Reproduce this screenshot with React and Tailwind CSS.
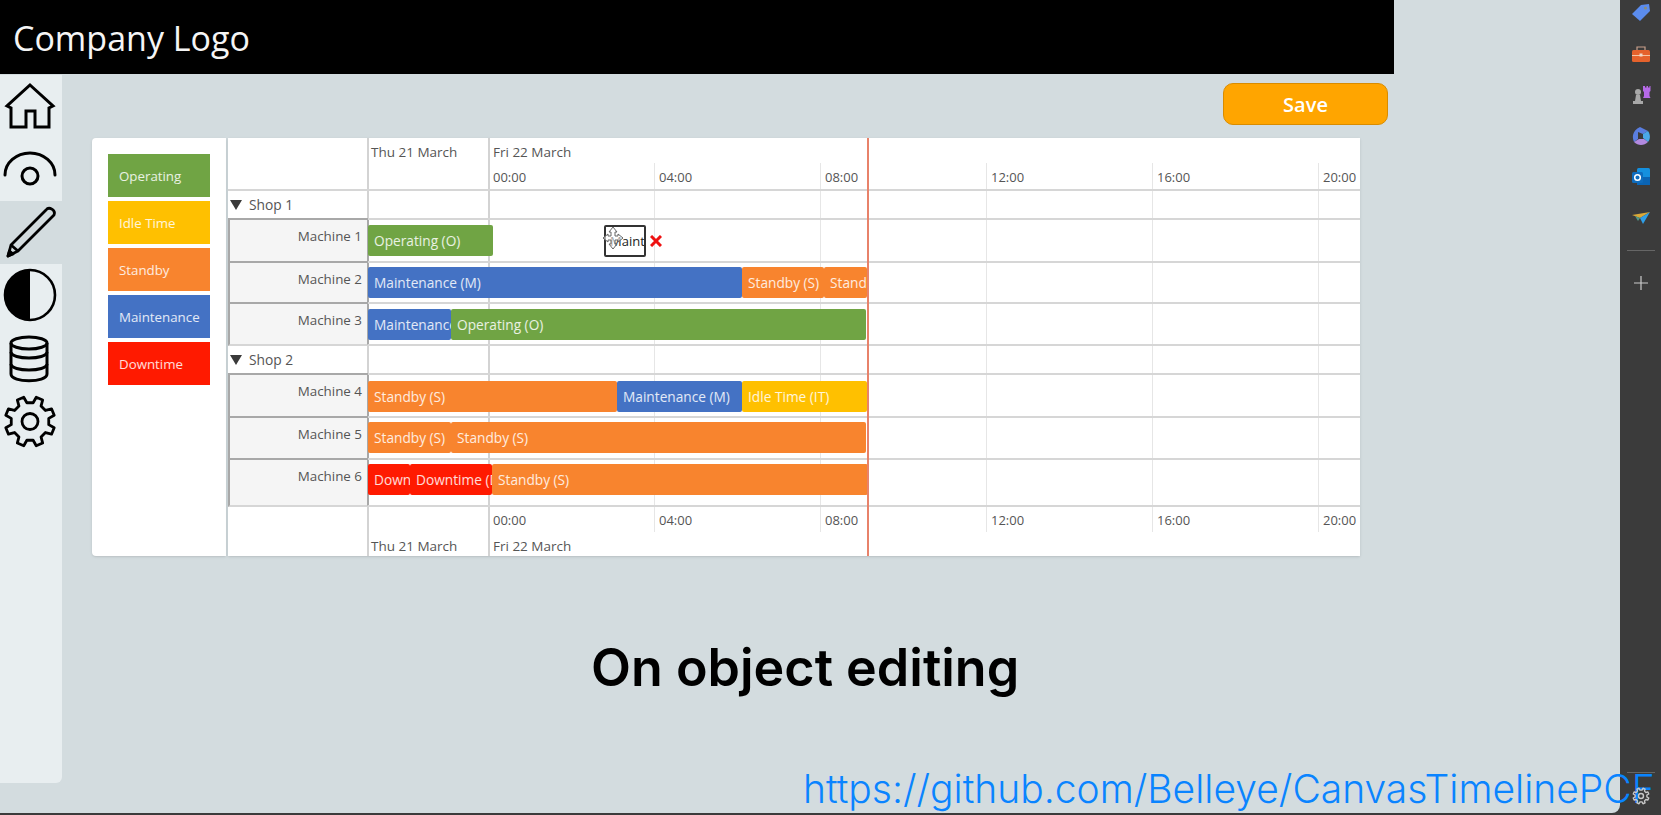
import React from 'react';

const legend = [
  { label: 'Operating', color: 'bg-[#70a444]' },
  { label: 'Idle Time', color: 'bg-[#ffc000]' },
  { label: 'Standby', color: 'bg-[#f8842e]' },
  { label: 'Maintenance', color: 'bg-[#4472c4]' },
  { label: 'Downtime', color: 'bg-[#ff1a00]' },
];

const hours = ['00:00', '04:00', '08:00', '12:00', '16:00', '20:00'];

const O = 'bg-[#70a444]';
const M = 'bg-[#4472c4]';
const S = 'bg-[#f8842e]';
const I = 'bg-[#ffc000]';
const D = 'bg-[#ff1a00]';

const groups = [
  {
    name: 'Shop 1',
    machines: [
      { name: 'Machine 1', h: 'h-[43px]', pt: 'pt-[5px]', bars: [{ w: 'w-[125px]', c: O, t: 'Operating (O)' }], ghost: true },
      { name: 'Machine 2', h: 'h-[41px]', pt: 'pt-[4px]', bars: [{ w: 'w-[374px]', c: M, t: 'Maintenance (M)' }, { w: 'w-[82px]', c: S, t: 'Standby (S)' }, { w: 'w-[43px]', c: S, t: 'Standby (S)' }] },
      { name: 'Machine 3', h: 'h-[42px]', pt: 'pt-[5px]', last: true, bars: [{ w: 'w-[83px]', c: M, t: 'Maintenance (M)' }, { w: 'w-[415px]', c: O, t: 'Operating (O)' }] },
    ],
  },
  {
    name: 'Shop 2',
    machines: [
      { name: 'Machine 4', h: 'h-[43px]', pt: 'pt-[6px]', bars: [{ w: 'w-[249px]', c: S, t: 'Standby (S)' }, { w: 'w-[125px]', c: M, t: 'Maintenance (M)' }, { w: 'w-[125px]', c: I, t: 'Idle Time (IT)' }] },
      { name: 'Machine 5', h: 'h-[42px]', pt: 'pt-[4px]', bars: [{ w: 'w-[83px]', c: S, t: 'Standby (S)' }, { w: 'w-[415px]', c: S, t: 'Standby (S)' }] },
      { name: 'Machine 6', h: 'h-[47px]', pt: 'pt-[4px]', last: true, bars: [{ w: 'w-[42px]', c: D, t: 'Downtime (D)' }, { w: 'w-[82px]', c: D, t: 'Downtime (D)' }, { w: 'w-[376px]', c: S, t: 'Standby (S)' }] },
    ],
  },
];

// 8 teeth, turned so that two of them sit on top
const gearPath = (cx, cy, ro, ri) => {
  const pt = (r, deg) => {
    const a = (deg * Math.PI) / 180;
    return `${(cx + r * Math.cos(a)).toFixed(2)} ${(cy + r * Math.sin(a)).toFixed(2)}`;
  };
  let d = '';
  for (let i = 0; i < 8; i++) {
    const c = 22.5 + i * 45;
    d += `${i ? 'L' : 'M'}${pt(ri, c - 13)} L${pt(ro, c - 8)} L${pt(ro, c + 8)} L${pt(ri, c + 13)} `;
  }
  return d + 'Z';
};

const Home = () => (
  <svg width="62" height="63" fill="none" stroke="black" strokeWidth="3" strokeLinejoin="miter">
    <path d="M30 10 L53 31 L49 33 L49 52 L35 52 L35 36 L26 36 L26 52 L11 52 L11 33 L7 31 Z" />
  </svg>
);
const Eye = () => (
  <svg width="62" height="63" fill="none" stroke="black" strokeWidth="3" strokeLinecap="round">
    <path d="M5 37 A25 22 0 0 1 55 37" />
    <circle cx="30" cy="38" r="8" />
  </svg>
);
const Pencil = () => (
  <svg width="62" height="63" fill="none" stroke="black" strokeWidth="2.8" strokeLinejoin="round">
    <path d="M46 9 C49 5 56 9 54 14 L18 50 L8 55 L11 44 Z" />
    <path d="M11 44 L18 50" />
    <path d="M8 55 L9.5 50 L13 53 Z" fill="black" />
  </svg>
);
const Half = () => (
  <svg width="62" height="63">
    <circle cx="30" cy="31" r="25" fill="none" stroke="black" strokeWidth="2.6" />
    <path d="M30 6 A25 25 0 0 0 30 56 Z" fill="black" />
  </svg>
);
const Database = () => (
  <svg width="62" height="63" fill="none" stroke="black" strokeWidth="3">
    <ellipse cx="29" cy="16" rx="18" ry="6" />
    <path d="M11 16 V47 C11 56 47 56 47 47 V16" />
    <path d="M11 25 C11 33 47 33 47 25" />
    <path d="M11 37 C11 45 47 45 47 37" />
  </svg>
);
const Gear = () => (
  <svg width="62" height="63" fill="none" stroke="black" strokeWidth="2.8" strokeLinejoin="round">
    <path d={gearPath(30, 31.5, 25, 19)} />
    <circle cx="30" cy="31.5" r="8" />
  </svg>
);

const sideIcons = [Home, Eye, Pencil, Half, Database, Gear];

const Tag = () => (
  <svg width="22" height="22" viewBox="0 0 22 22"><path d="M2 12 L11 3 L19 2 L20 9 L10 19 Z" fill="#5b8cee" /><circle cx="15.5" cy="6" r="1.6" fill="#8a8f80" /></svg>
);
const Toolbox = () => (
  <svg width="22" height="22" viewBox="0 0 22 22" fill="none"><path d="M7 7 V4 H15 V7" stroke="#c9a08c" strokeWidth="1.2" /><rect x="2" y="7" width="18" height="12" rx="1.5" fill="#e5622c" /><rect x="2" y="12" width="18" height="1" fill="#f4c4a4" /><rect x="9.5" y="10.5" width="3" height="3" fill="#f0d8c8" /></svg>
);
const Chess = () => (
  <svg width="22" height="22" viewBox="0 0 22 22"><circle cx="8" cy="8" r="3" fill="#a8a8a8" /><path d="M6 11 H10 L11 17 H13 V20 H3 V17 H5 Z" fill="#a8a8a8" /><path d="M13 2 H15 V3.5 H16.5 V2 H18 V3.5 H19.5 V2 H20.5 V7 L19.5 8 V12 L20.5 14 H13 L14 12 V8 L13 7 Z" fill="#b66ae8" /></svg>
);
const Copilot = () => (
  <svg width="22" height="22" viewBox="0 0 22 22" fill="none">
    <path d="M10 2 L18 6 L13 9 L8 7 V14 L4 17 C2 12 2 6 10 2 Z" fill="#5a7ee0" />
    <path d="M18 6 C21 10 20 15 18 17 L13 13 V9 Z" fill="#4aa8e8" />
    <path d="M4 17 L9 14 L14 14 L18 17 C14 21 8 21 4 17 Z" fill="#b28ae0" />
  </svg>
);
const Outlook = () => (
  <svg width="22" height="22" viewBox="0 0 22 22"><rect x="7" y="2" width="13" height="17" rx="1.5" fill="#1490df" /><rect x="7" y="11" width="13" height="8" fill="#0a64b4" /><rect x="2" y="6" width="11" height="11" rx="1.5" fill="#0f6cbd" /><circle cx="7.5" cy="11.5" r="2.8" fill="none" stroke="white" strokeWidth="1.5" /></svg>
);
const Plane = () => (
  <svg width="22" height="22" viewBox="0 0 22 22"><path d="M2 8 L20 5 L10 11 Z" fill="#d9a838" /><path d="M20 5 L10 11 L13 17 Z" fill="#2f9fe8" /><path d="M5 9 L10 11 L8 14 Z" fill="#4f9a8a" /></svg>
);

const railIcons = [Tag, Toolbox, Chess, Copilot, Outlook, Plane];

const MoveCursor = () => (
  <svg width="22" height="24" viewBox="0 0 22 24" fill="white" fillOpacity="0.6" stroke="#666" strokeWidth="1" className="absolute top-[1px] left-[-2px]">
    <path d="M11 1 L15 6 H13 V10 H16 V8 L21 12 L16 16 V14 H13 V18 H15 L11 23 L7 18 H9 V14 H6 V16 L1 12 L6 8 V10 H9 V6 H7 Z" />
  </svg>
);

const TickLines = () => (
  <>
    <div className="absolute inset-y-0 left-[139px] w-[2px] bg-[#d3d3d3]" />
    <div className="absolute inset-y-0 left-[260px] w-[2px] bg-[#d3d3d3]" />
    <div className="absolute top-[25px] bottom-[24px] left-[261px] flex">
      {hours.slice(1).map((h) => (
        <div key={h} className="w-[166px] shrink-0 border-r border-[#e6e6e6]" />
      ))}
    </div>
  </>
);

const HourLabels = () => (
  <div className="flex pl-[261px] text-[13px] leading-none text-[#555]">
    {hours.map((h) => (
      <div key={h} className="w-[166px] shrink-0 pl-[4px]">{h}</div>
    ))}
  </div>
);

const DateLabels = ({ className }) => (
  <div className={`flex pl-[139px] text-[13.5px] leading-[20px] text-[#555] ${className}`}>
    <div className="w-[122px] pl-[4px]">Thu 21 March</div>
    <div className="pl-[4px]">Fri 22 March</div>
  </div>
);

const Row = ({ name, h, pt, bars, ghost, last }) => (
  <div className={`flex ${h}`}>
    <div className={`w-[141px] shrink-0 border-x-2 border-b-2 border-x-[#a8a8a8] ${last ? 'border-b-[#d6d6d6]' : 'border-b-[#a8a8a8]'} bg-[#f5f5f5] pt-[6px] pr-[5px] text-right text-[13.4px] leading-[20px] text-[#555]`}>{name}</div>
    <div className={`flex flex-1 items-start border-b-2 border-[#d6d6d6] ${pt} -ml-[1px]`}>
      {bars.map((b, i) => (
        <div key={i} className={`${b.w} ${b.c} h-[31px] shrink-0 overflow-hidden rounded-[2px] pl-[6px] text-[13.7px] leading-[32px] whitespace-nowrap text-white/85`}>{b.t}</div>
      ))}
      {ghost && (
        <div className="relative ml-[111px] flex items-center">
          <div className="h-[32px] w-[42px] overflow-hidden rounded-[2px] border-2 border-[#333] bg-white pl-[4px] text-[13px] leading-[29px] whitespace-nowrap text-[#222]">
            Maint
          </div>
          <MoveCursor />
          <svg width="12" height="12" viewBox="0 0 12 12" className="ml-[4px]" stroke="#ee1111" strokeWidth="3"><path d="M1 1 L11 11 M11 1 L1 11" /></svg>
        </div>
      )}
    </div>
  </div>
);

export default function App() {
  return (
    <div className="relative flex h-[815px] w-[1661px] overflow-hidden bg-[#3b3b3b] font-['Open_Sans',sans-serif]">
      <div className="flex h-[813px] w-[1620px] flex-col rounded-br-lg bg-[#d3dcdf]">
        <div className="flex h-[74px] w-[1394px] shrink-0 items-center bg-black pt-[2px] pl-[13px] text-[34px] text-[#f5f5f5]">Company Logo</div>
        <div className="flex flex-1">
          <div className="mt-[1px] h-[708px] w-[62px] shrink-0 rounded-br-md bg-[#e8eef0]">
            {sideIcons.map((Icon, i) => (
              <div key={i} className={`h-[63px] ${i === 2 ? 'bg-[#d3dcdf]' : ''}`}><Icon /></div>
            ))}
          </div>
          <div className="flex-1">
            <div className="mt-[9px] ml-[1161px] flex h-[42px] w-[165px] items-center justify-center rounded-[10px] border border-[#d98c00] bg-[#ffa500] pt-[1px] text-[20px] font-semibold text-white">Save</div>
            <div className="mt-[13px] ml-[30px] flex h-[418px] w-[1268px]">
              <div className="w-[134px] rounded-l-sm bg-white pt-[16px] pl-[16px] shadow-sm">
                <div className="flex flex-col gap-[4px]">
                  {legend.map((l) => (
                    <div key={l.label} className={`${l.color} flex h-[43px] w-[102px] items-center pt-[3px] pl-[11px] text-[13.3px] text-white/85`}>{l.label}</div>
                  ))}
                </div>
              </div>
              <div className="relative ml-[2px] w-[1132px] bg-white shadow-sm">
                <TickLines />
                <div className="relative">
                  <div className="h-[53px] border-b-2 border-[#d6d6d6]">
                    <DateLabels className="pt-[4px]" />
                    <div className="mt-[9px]"><HourLabels /></div>
                  </div>
                  {groups.map((g) => (
                    <div key={g.name}>
                      <div className="flex h-[29px]">
                        <div className="flex w-[140px] shrink-0 items-center border-b-2 border-[#a8a8a8] pl-[2px] text-[13.8px] text-[#555]">
                          <svg width="12" height="10" viewBox="0 0 12 10" className="mr-[7px]"><path d="M0 0 H12 L6 10 Z" fill="#3a3a3a" /></svg>
                          <span className="pt-[2px]">{g.name}</span>
                        </div>
                        <div className="flex-1 border-b-2 border-[#d6d6d6]" />
                      </div>
                      {g.machines.map((m) => <Row key={m.name} {...m} />)}
                    </div>
                  ))}
                  <div className="pt-[7px]">
                    <HourLabels />
                    <DateLabels className="pt-[9px]" />
                  </div>
                </div>
                <div className="absolute top-0 bottom-0 left-[639px] w-[2px] bg-[#e8826a]" />
              </div>
            </div>
            <div className="mt-[82px] pl-[529px] font-['Inter',sans-serif] text-[52px] leading-[60px] font-semibold whitespace-nowrap text-black">On object editing</div>
            <div className="relative z-10 mt-[68px] ml-[741px] font-['Inter',sans-serif] text-[39px] leading-[46px] font-light whitespace-nowrap text-[#0a84ff]">https://github.com/Belleye/CanvasTimelinePCF</div>
          </div>
        </div>
      </div>
      <div className="relative z-20 flex w-[41px] flex-col items-center">
        <div className="-mt-[8px]">
          {railIcons.map((Icon, i) => (
            <div key={i} className="flex h-[41px] items-center justify-center"><Icon /></div>
          ))}
        </div>
        <div className="mt-[12px] h-px w-[28px] bg-[#666]" />
        <div className="mt-[25px] text-[#ccc]">
          <svg width="14" height="14" stroke="currentColor" strokeWidth="1.2" className="block"><path d="M7 0 V14 M0 7 H14" /></svg>
        </div>
        <div className="mt-auto h-px w-[28px] bg-[#666]" />
        <svg width="18" height="18" fill="none" stroke="#c8c8c8" strokeWidth="1.4" strokeLinejoin="round" className="mt-[14px] mb-[10px]">
          <path d={gearPath(9, 9, 8, 6)} />
          <circle cx="9" cy="9" r="2.5" />
        </svg>
      </div>
    </div>
  );
}
